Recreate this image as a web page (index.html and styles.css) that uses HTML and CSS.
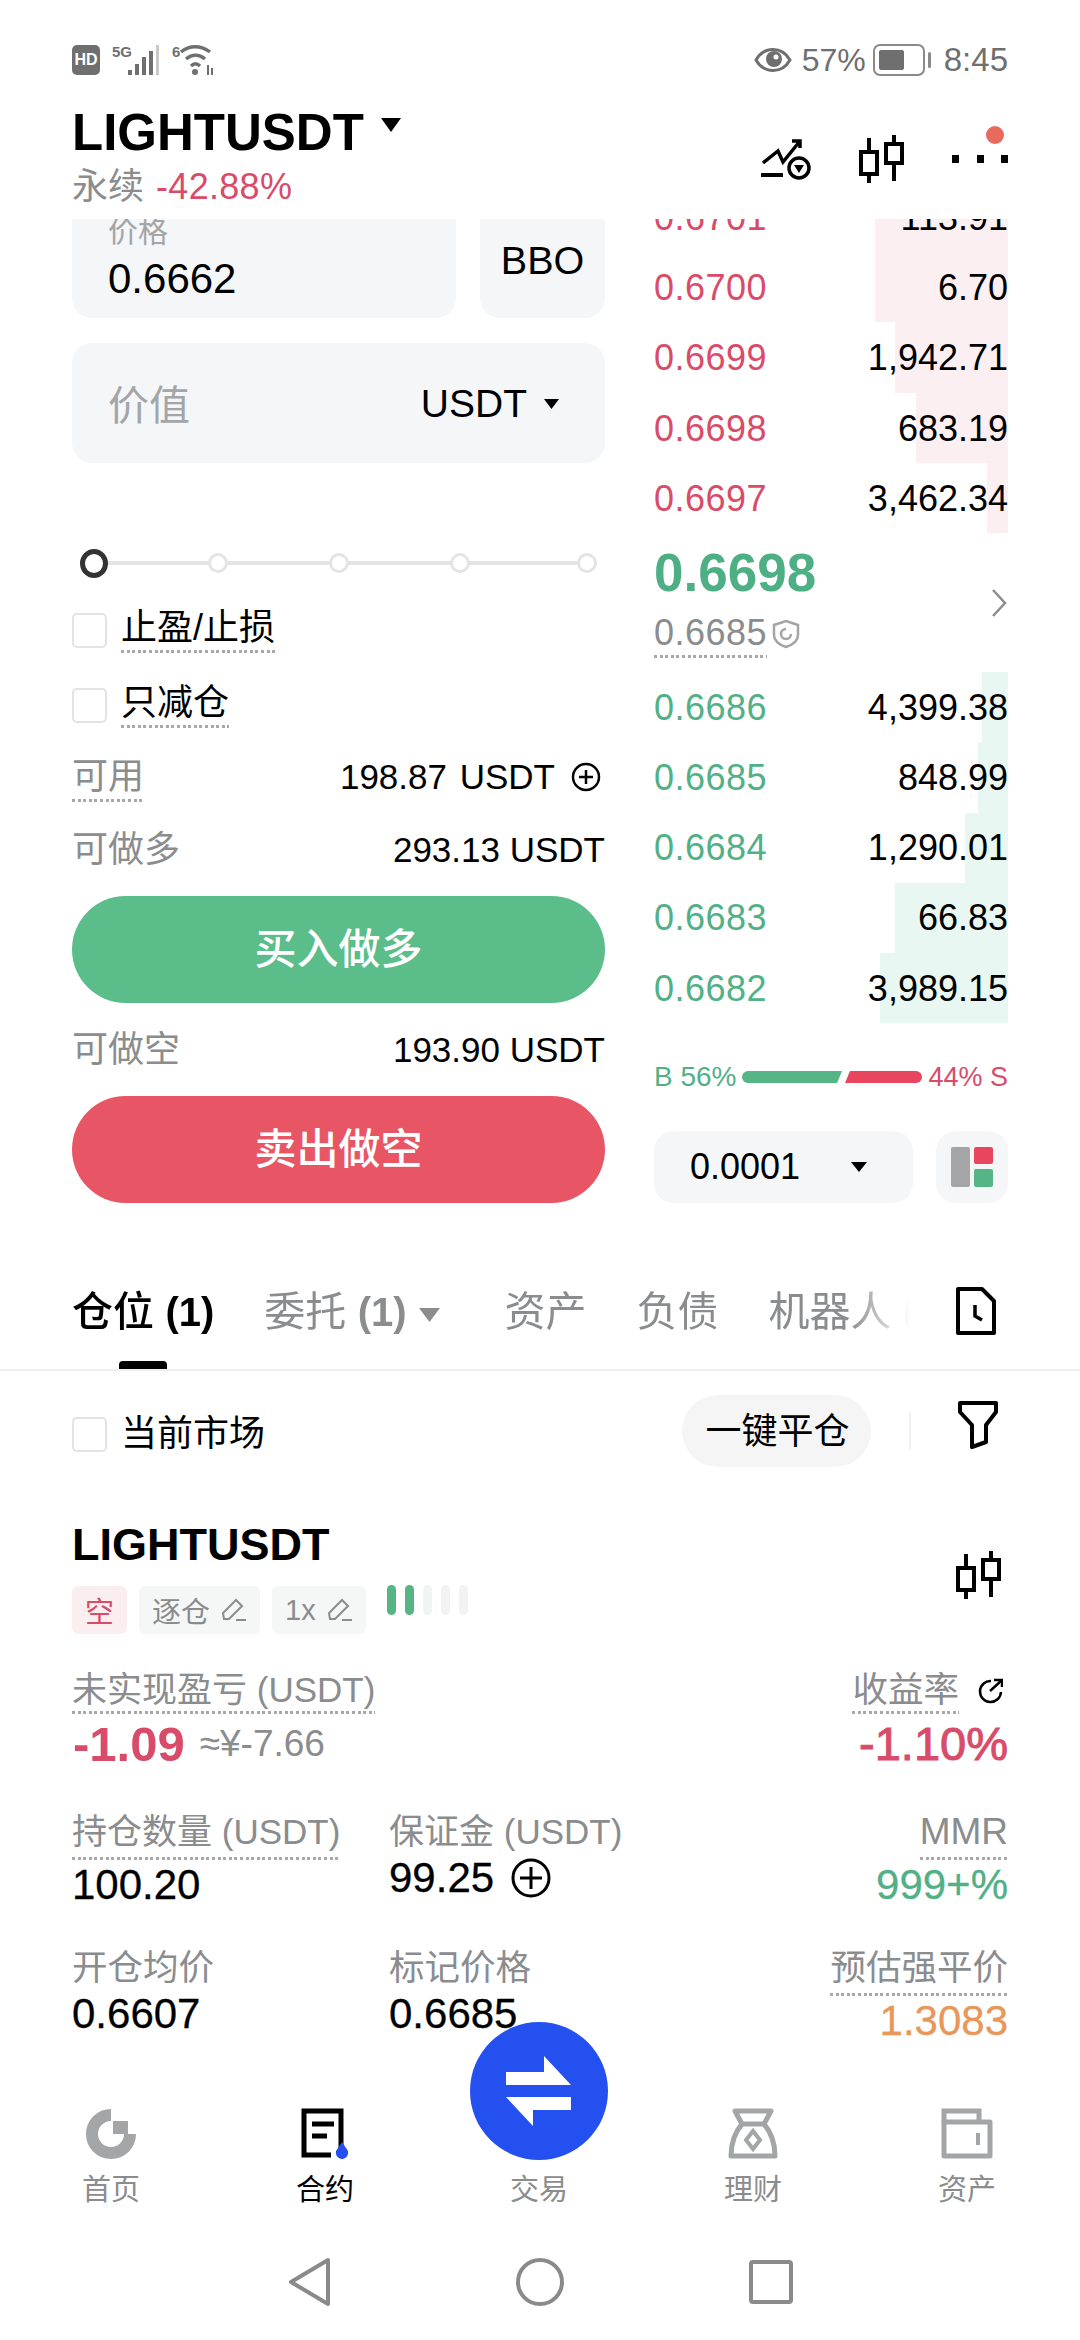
FILE: index.html
```html
<!DOCTYPE html>
<html lang="zh-CN">
<head>
<meta charset="utf-8">
<title>LIGHTUSDT</title>
<link rel="stylesheet" href="styles.css">
</head>
<body>
<div class="phone">

  <!-- system status bar -->
  <div class="status">
    <div class="status-group">
      <span class="hd">HD</span>
      <svg class="sig" width="50" height="32" viewBox="0 0 50 32">
        <text x="0" y="13" class="tiny">5G</text>
        <g fill="#6f6f6f">
          <rect x="16" y="26" width="4" height="5"/><rect x="23" y="20" width="4" height="11"/>
          <rect x="30" y="13" width="4" height="18"/><rect x="37" y="7" width="4" height="24"/>
        </g>
        <rect x="44" y="1" width="3" height="30" fill="#c9c9c9"/>
      </svg>
      <svg class="wifi" width="44" height="32" viewBox="0 0 44 32">
        <text x="0" y="13" class="tiny">6</text>
        <g fill="none" stroke="#6f6f6f" stroke-width="3.4">
          <path d="M9 8 C17 1 29 1 38 8"/><path d="M14 15 C20 10 27 10 33 15"/><path d="M19 22 C22 19 25 19 28 22"/>
        </g>
        <circle cx="23" cy="28" r="3" fill="#6f6f6f"/>
        <path d="M36 21V31M40 24V31" stroke="#6f6f6f" stroke-width="2"/>
      </svg>
    </div>
    <div class="status-group status-right">
      <svg width="38" height="26" viewBox="0 0 38 26">
        <path d="M2 13 C10 -1 28 -1 36 13 C28 27 10 27 2 13Z" fill="none" stroke="#6f6f6f" stroke-width="3"/>
        <circle cx="20" cy="12" r="8" fill="#6f6f6f"/><circle cx="22" cy="10" r="2.5" fill="#fff"/>
      </svg>
      <span class="st-pct">57%</span>
      <svg width="58" height="32" viewBox="0 0 58 32">
        <rect x="1" y="1" width="50" height="30" rx="6" fill="none" stroke="#8a8a8a" stroke-width="2"/>
        <rect x="6" y="6" width="25" height="20" rx="2" fill="#6f6f6f"/>
        <rect x="55" y="8" width="3" height="16" rx="1.5" fill="#8a8a8a"/>
      </svg>
      <span class="st-time">8:45</span>
    </div>
  </div>

  <!-- instrument header -->
  <header class="head">
    <div>
      <div class="symbol">LIGHTUSDT<svg class="sym-caret" width="20" height="14" viewBox="0 0 20 14"><path d="M0 0H20L10 14Z" fill="#000"/></svg></div>
      <div class="sub"><span class="muted">永续</span> <span class="red change">-42.88%</span></div>
    </div>
    <div class="head-icons">
      <svg class="ic-trend" width="50" height="42" viewBox="0 0 50 42">
        <path d="M2 25 L17 13 L22 24 L39 3 M31 3 H39 V10" fill="none" stroke="#000" stroke-width="3.5"/>
        <path d="M0 37H22" stroke="#000" stroke-width="4"/>
        <circle cx="38" cy="30" r="10" fill="#fff" stroke="#000" stroke-width="3.5"/>
        <path d="M33 27H43L38 35Z" fill="#000"/>
      </svg>
      <svg class="ic-candle" width="46" height="50" viewBox="0 0 46 50">
        <path d="M11 3V17M11 39V48M36 0V9M36 28V46" stroke="#000" stroke-width="4"/>
        <rect x="3" y="17" width="16" height="22" fill="none" stroke="#000" stroke-width="4"/>
        <rect x="28" y="9" width="16" height="19" fill="none" stroke="#000" stroke-width="4"/>
      </svg>
      <svg class="ic-more" width="58" height="58" viewBox="0 0 58 58">
        <circle cx="45" cy="9" r="9" fill="#e86a5c"/>
        <rect x="2" y="29" width="7" height="8" fill="#000"/><rect x="27" y="29" width="7" height="8" fill="#000"/><rect x="51" y="29" width="7" height="8" fill="#000"/>
      </svg>
    </div>
  </header>

  <!-- order form and order book -->
  <section class="market">
    <div class="market-grid">
      <div class="form">
        <div class="price-row">
          <div class="box price-box">
            <div class="box-label">价格</div>
            <div class="box-value">0.6662</div>
          </div>
          <div class="box bbo">BBO</div>
        </div>
        <div class="box value-box">
          <span class="placeholder">价值</span>
          <span class="unit">USDT<svg class="caret" width="15" height="10" viewBox="0 0 15 10"><path d="M0 0H15L7.500 10Z" fill="#000"/></svg></span>
        </div>
        <div class="slider">
          <span class="knob"></span><span class="node first"></span><span class="node"></span><span class="node"></span><span class="node last"></span>
        </div>
        <div class="check-row"><span class="checkbox"></span><span class="dotted">止盈/止损</span></div>
        <div class="check-row"><span class="checkbox"></span><span class="dotted">只减仓</span></div>
        <div class="info-row avail">
          <span class="dotted muted">可用</span>
          <span class="info-val spaced">198.87 USDT<svg class="plus-sm" width="30" height="30" viewBox="0 0 30 30"><circle cx="15" cy="15" r="13" fill="none" stroke="#000" stroke-width="2.500"/><path d="M15 8V22M8 15H22" stroke="#000" stroke-width="2.500"/></svg></span>
        </div>
        <div class="info-row long"><span class="muted">可做多</span><span class="info-val">293.13 USDT</span></div>
        <div class="cta buy">买入做多</div>
        <div class="info-row"><span class="muted">可做空</span><span class="info-val">193.90 USDT</span></div>
        <div class="cta sell">卖出做空</div>
      </div>

      <div class="book">
        <div class="book-row ask"><i class="depth" style="width:133px"></i><b>0.6701</b><span>113.91</span></div>
        <div class="book-row ask"><i class="depth" style="width:133px"></i><b>0.6700</b><span>6.70</span></div>
        <div class="book-row ask"><i class="depth" style="width:113px"></i><b>0.6699</b><span>1,942.71</span></div>
        <div class="book-row ask"><i class="depth" style="width:92px"></i><b>0.6698</b><span>683.19</span></div>
        <div class="book-row ask"><i class="depth" style="width:21px"></i><b>0.6697</b><span>3,462.34</span></div>
        <div class="mid">
          <div class="mid-text">
            <div class="mid-price">0.6698</div>
            <div class="mark-row">
              <span class="dotted mark">0.6685</span>
              <svg class="shield" width="28" height="30" viewBox="0 0 28 30">
                <path d="M14 2 L26 6 V16 C26 22 20 26 14 28 C8 26 2 22 2 16 V6Z" fill="none" stroke="#a3a5a7" stroke-width="2.500"/>
                <path d="M19 15 A5 5 0 1 1 14 10" fill="none" stroke="#a3a5a7" stroke-width="2.500"/>
              </svg>
            </div>
          </div>
          <svg class="chev" width="16" height="28" viewBox="0 0 16 28"><path d="M2 1 L14 14 L2 27" fill="none" stroke="#8a8c8e" stroke-width="2.500"/></svg>
        </div>
        <div class="book-row bid"><i class="depth" style="width:26px"></i><b>0.6686</b><span>4,399.38</span></div>
        <div class="book-row bid"><i class="depth" style="width:30px"></i><b>0.6685</b><span>848.99</span></div>
        <div class="book-row bid"><i class="depth" style="width:43px"></i><b>0.6684</b><span>1,290.01</span></div>
        <div class="book-row bid"><i class="depth" style="width:113px"></i><b>0.6683</b><span>66.83</span></div>
        <div class="book-row bid"><i class="depth" style="width:128px"></i><b>0.6682</b><span>3,989.15</span></div>
        <div class="ratio">
          <span class="green">B 56%</span>
          <span class="ratio-bar">
            <svg width="180" height="12" viewBox="0 0 180 12">
              <path d="M6 0H100L95 12H6A6 6 0 0 1 6 0Z" fill="#55b585"/>
              <path d="M108 0H174A6 6 0 0 1 174 12H103Z" fill="#e8455f"/>
            </svg>
          </span>
          <span class="red sell-share">44% S</span>
        </div>
        <div class="book-tools">
          <div class="box step">0.0001<svg width="16" height="10" viewBox="0 0 16 10"><path d="M0 0H16L8 10Z" fill="#000"/></svg></div>
          <div class="box layout">
            <svg width="42" height="42" viewBox="0 0 42 42">
              <rect x="0" y="1" width="19" height="40" rx="2" fill="#a3a5a7"/>
              <rect x="23" y="1" width="19" height="17" rx="2" fill="#e8455f"/>
              <rect x="23" y="23" width="19" height="18" rx="2" fill="#55b585"/>
            </svg>
          </div>
        </div>
      </div>
    </div>
  </section>

  <!-- account tabs -->
  <nav class="tabs">
    <div class="tab-list">
      <span class="tab active">仓位 <b>(1)</b></span>
      <span class="tab">委托 <b>(1)</b><svg class="tab-caret" width="21" height="14" viewBox="0 0 21 14"><path d="M0 0H21L10.500 14Z" fill="#8a8c8e"/></svg></span>
      <span class="tab">资产</span>
      <span class="tab">负债</span>
      <span class="tab">机器人 <b>(0)</b></span>
    </div>
    <svg class="tab-doc" width="42" height="50" viewBox="0 0 42 50">
      <path d="M3 3H27L39 15V47H3Z" fill="none" stroke="#000" stroke-width="4" stroke-linejoin="round"/>
      <path d="M20 19V30L27 34" fill="none" stroke="#000" stroke-width="3.500"/>
    </svg>
  </nav>

  <!-- open positions -->
  <section class="positions">
    <div class="filter-row">
      <span class="checkbox"></span>
      <span class="filter-label">当前市场</span>
      <span class="close-all">一键平仓</span>
      <span class="divider"></span>
      <svg width="40" height="48" viewBox="0 0 40 48"><path d="M2 2H38V11L28 24V41L14 46V24L2 11Z" fill="none" stroke="#000" stroke-width="4" stroke-linejoin="round"/></svg>
    </div>

    <div class="pos-title">
      <span>LIGHTUSDT</span>
      <svg width="46" height="50" viewBox="0 0 46 50">
        <path d="M11 3V17M11 39V48M36 0V9M36 28V46" stroke="#000" stroke-width="4"/>
        <rect x="3" y="17" width="16" height="22" fill="none" stroke="#000" stroke-width="4"/>
        <rect x="28" y="9" width="16" height="19" fill="none" stroke="#000" stroke-width="4"/>
      </svg>
    </div>

    <div class="tags">
      <span class="tag tag-short">空</span>
      <span class="tag">逐仓<svg width="26" height="26" viewBox="0 0 26 26"><path d="M3 22 L2 16 L15 3 L21 9 L8 22Z M15 23H25" fill="none" stroke="#8a8c8e" stroke-width="2"/></svg></span>
      <span class="tag">1x<svg width="26" height="26" viewBox="0 0 26 26"><path d="M3 22 L2 16 L15 3 L21 9 L8 22Z M15 23H25" fill="none" stroke="#8a8c8e" stroke-width="2"/></svg></span>
      <span class="level"><i class="on"></i><i class="on"></i><i></i><i></i><i></i></span>
    </div>

    <div class="stat-grid first">
      <div class="stat">
        <span class="dotted stat-label flush">未实现盈亏 (USDT)</span>
        <div class="stat-big red"><b>-1.09</b><span class="approx">≈¥-7.66</span></div>
      </div>
      <div class="stat right col3">
        <span class="stat-head">
          <span class="dotted stat-label flush han">收益率</span>
          <svg width="26" height="26" viewBox="0 0 26 26"><path d="M14 3 A10.500 10.500 0 1 0 24 14" fill="none" stroke="#000" stroke-width="2.500"/><path d="M13 13 L24 3 M17 2 H25 V9" fill="none" stroke="#000" stroke-width="2.500"/></svg>
        </span>
        <div class="stat-big red"><span class="pct">-1.10%</span></div>
      </div>
    </div>

    <div class="stat-grid second">
      <div class="stat">
        <span class="dotted stat-label">持仓数量 (USDT)</span>
        <div class="stat-val">100.20</div>
      </div>
      <div class="stat mid-col">
        <span class="stat-label">保证金 (USDT)</span>
        <div class="stat-val">99.25<svg class="plus-lg" width="40" height="40" viewBox="0 0 40 40"><circle cx="20" cy="20" r="18" fill="none" stroke="#000" stroke-width="3"/><path d="M20 9V31M9 20H31" stroke="#000" stroke-width="3"/></svg></div>
      </div>
      <div class="stat right">
        <span class="dotted stat-label mmr">MMR</span>
        <div class="stat-val green">999+%</div>
      </div>
    </div>

    <div class="stat-grid third">
      <div class="stat">
        <span class="stat-label han">开仓均价</span>
        <div class="stat-val">0.6607</div>
      </div>
      <div class="stat mid-col">
        <span class="stat-label han">标记价格</span>
        <div class="stat-val">0.6685</div>
      </div>
      <div class="stat right">
        <span class="dotted stat-label han">预估强平价</span>
        <div class="stat-val orange">1.3083</div>
      </div>
    </div>
  </section>

  <!-- app navigation -->
  <nav class="tabbar">
    <div class="nav-item">
      <svg width="52" height="52" viewBox="0 0 52 52">
        <path d="M26 7 A19 19 0 1 0 45 26" fill="none" stroke="#a3a5a7" stroke-width="12"/>
        <rect x="28" y="13" width="15" height="13" fill="#a3a5a7"/>
      </svg>
      <span>首页</span>
    </div>
    <div class="nav-item current">
      <svg width="52" height="52" viewBox="0 0 52 52">
        <path d="M42 40V3H5V47H32" fill="none" stroke="#000" stroke-width="5"/>
        <path d="M13 16H35M13 28H28" stroke="#000" stroke-width="5"/>
        <path d="M43 34 L49 43 C50 49 45 51 43 51 C41 51 36 49 37 43Z" fill="#2450f0"/>
      </svg>
      <span>合约</span>
    </div>
    <div class="nav-item trade">
      <div class="fab">
        <svg width="66" height="70" viewBox="0 0 66 70">
          <path d="M38 0 L65 29 H0 V16 H38Z M0 41 H65 V54 H27 V70Z" fill="#fff"/>
        </svg>
      </div>
      <span class="nav-spacer"></span>
      <span>交易</span>
    </div>
    <div class="nav-item">
      <svg width="52" height="52" viewBox="0 0 52 52">
        <path d="M8 3H44L37 16C43 23 48 32 48 48H4C4 32 9 23 15 16Z" fill="none" stroke="#a3a5a7" stroke-width="5" stroke-linejoin="round"/>
        <path d="M15 16H37" stroke="#a3a5a7" stroke-width="5"/>
        <path d="M26 23 L33 32 L26 41 L19 32Z" fill="none" stroke="#a3a5a7" stroke-width="4"/>
      </svg>
      <span>理财</span>
    </div>
    <div class="nav-item">
      <svg width="52" height="52" viewBox="0 0 52 52">
        <path d="M3 14V3H38V14" fill="none" stroke="#a3a5a7" stroke-width="5"/>
        <rect x="3" y="14" width="46" height="34" fill="none" stroke="#a3a5a7" stroke-width="5" stroke-linejoin="round"/>
        <path d="M37 25V37" stroke="#a3a5a7" stroke-width="4"/>
      </svg>
      <span>资产</span>
    </div>
  </nav>

  <!-- system navigation -->
  <div class="sysnav">
    <svg width="48" height="50" viewBox="0 0 48 50"><path d="M43 3 L6 25 L43 47Z" fill="none" stroke="#8a8a8a" stroke-width="4" stroke-linejoin="round"/></svg>
    <svg width="48" height="50" viewBox="0 0 48 50"><circle cx="24" cy="25" r="22" fill="none" stroke="#8a8a8a" stroke-width="4"/></svg>
    <svg width="48" height="50" viewBox="0 0 48 50"><rect x="4" y="5" width="40" height="40" rx="2" fill="none" stroke="#8a8a8a" stroke-width="4"/></svg>
  </div>
</div>
</body>
</html>
```

FILE: styles.css
```css
* { box-sizing: border-box; }

html, body { margin: 0; padding: 0; background: #fff; }

.phone {
  position: relative;
  width: 1080px;
  height: 2340px;
  overflow: hidden;
  display: flex;
  flex-direction: column;
  font-family: "Liberation Sans", "Noto Sans CJK SC", sans-serif;
  color: #000;
  font-size: 36px;
}

.muted { color: #8a8c8e; }
.red { color: #d94c69; }
.green { color: #52b087; }
.orange { color: #e8975a; }

.dotted {
  display: inline-block;
  padding-bottom: 3px;
  background: repeating-linear-gradient(90deg, #a6a8aa 0 3px, transparent 3px 5.600px) left bottom / 100% 3px no-repeat;
}

/* Status bar */
.status {
  height: 100px;
  flex: none;
  padding: 20px 72px 0;
  display: flex;
  justify-content: space-between;
  align-items: center;
}
.status-group { display: flex; align-items: center; }
.hd {
  width: 28px;
  height: 30px;
  border-radius: 5px;
  background: #6f6f6f;
  color: #fff;
  font-size: 16px;
  font-weight: 700;
  line-height: 30px;
  text-align: center;
}
.tiny { font: 700 15px "Liberation Sans", sans-serif; fill: #6f6f6f; }
.sig { margin-left: 12px; }
.wifi { margin-left: 10px; }
.status-right { color: #6f6f6f; }
.st-pct { font-size: 32px; margin: 0 7px 0 10px; }
.st-time { font-size: 33px; margin-left: 13px; }

/* Instrument header */
.head {
  height: 119px;
  flex: none;
  padding: 5px 72px 0;
  display: flex;
  justify-content: space-between;
}
.symbol {
  font-size: 51px;
  font-weight: 700;
  line-height: 56px;
  display: flex;
}
.sym-caret { margin: 13px 0 0 17px; }
.sub { margin-top: 4px; line-height: 44px; font-size: 36px; }
.change { margin-left: 2px; letter-spacing: 0.300px; }
.head-icons { display: flex; align-items: flex-start; margin-top: 21px; }
.ic-trend { margin-top: 12px; }
.ic-candle { margin: 9px 0 0 47px; }
.ic-more { margin-left: 46px; }

/* Order form and book */
.market {
  height: 1051px;
  flex: none;
  overflow: hidden;
  padding: 0 72px;
}
.market-grid {
  margin-top: -37px;
  display: grid;
  grid-template-columns: 533px 354px;
  column-gap: 49px;
}
.form { padding-top: 7px; }
.box { background: #f5f6f8; border-radius: 20px; }
.price-row { display: flex; gap: 24px; }
.price-box { width: 384px; height: 129px; padding: 25px 36px 0; }
.box-label { color: #a3a5a7; font-size: 30px; line-height: 36px; }
.box-value { font-size: 42px; line-height: 48px; margin-top: 5px; }
.bbo {
  flex: 1;
  height: 129px;
  padding-top: 49px;
  text-align: center;
  font-size: 39.500px;
  line-height: 44px;
}
.value-box {
  height: 120px;
  margin-top: 25px;
  padding: 0 44px 0 36px;
  display: flex;
  justify-content: space-between;
  align-items: center;
}
.placeholder { color: #a3a5a7; font-size: 41px; margin-top: -3px; }
.unit { font-size: 39px; display: flex; align-items: center; margin: 2px 2px 0 0; }
.caret { margin-left: 17px; }

.slider {
  height: 30px;
  margin-top: 85px;
  padding: 0 8px 0 8px;
  display: flex;
  align-items: center;
  gap: 101px;
  background: linear-gradient(#e4e4e4, #e4e4e4) center / 500px 4px no-repeat;
}
.knob {
  width: 28px;
  height: 29px;
  flex: none;
  border: 5px solid #333;
  border-radius: 50%;
  background: #fff;
}
.node {
  width: 20px;
  height: 20px;
  flex: none;
  border: 3px solid #e4e4e4;
  border-radius: 50%;
  background: #fff;
}
.node.first { margin-left: -1px; }
.node.last { margin-left: auto; }

.check-row {
  margin-top: 28px;
  display: flex;
  align-items: flex-start;
  line-height: 44px;
}
.checkbox {
  width: 35px;
  height: 35px;
  flex: none;
  border: 2.500px solid #e2e3e4;
  border-radius: 5px;
  background: #fff;
}
.check-row .checkbox { margin: 7px 14px 0 0; }

.info-row {
  margin-top: 24px;
  height: 44px;
  line-height: 44px;
  display: flex;
  justify-content: space-between;
  align-items: center;
}
.info-row.avail { margin-top: 27px; height: 47px; align-items: flex-start; }
.info-row.long { margin-top: 26px; }
.info-val { font-size: 35px; display: flex; align-items: center; }
.info-val.spaced { word-spacing: 3px; }
.plus-sm { margin: 0 4px 0 16px; }
.cta {
  height: 107px;
  margin-top: 24px;
  border-radius: 54px;
  color: #fff;
  font-size: 42px;
  font-weight: 500;
  line-height: 107px;
  text-align: center;
}
.buy { background: #5bbd8a; }
.sell { background: #e85665; }
.cta + .info-row { margin-top: 25px; }

.book-row {
  position: relative;
  display: flex;
  justify-content: space-between;
  align-items: center;
  font-size: 36px;
}
.book-row b { font-weight: 400; position: relative; letter-spacing: 0.500px; }
.book-row span { position: relative; }
.depth { position: absolute; top: 0; right: 0; bottom: 0; }
.ask { height: 70.200px; padding-top: 2px; }
.ask b { color: #d94c69; }
.ask .depth { background: #fbeff1; }
.bid { height: 70.300px; padding-top: 1px; }
.bid b { color: #52b087; }
.bid .depth { background: #e8f7f1; }

.mid {
  height: 139px;
  display: flex;
  justify-content: space-between;
  align-items: center;
}
.mid-price {
  color: #4eaf85;
  font-size: 53px;
  font-weight: 700;
  line-height: 60px;
}
.mid-text { margin-top: -4px; }
.mark-row { display: flex; align-items: center; margin-top: 8px; line-height: 44px; }
.mark { color: #8a8c8e; font-size: 36px; letter-spacing: 0.500px; }
.shield { margin-left: 5px; }
.chev { margin: 2px 1px 0 0; }

.ratio {
  height: 24px;
  margin-top: 42px;
  display: flex;
  justify-content: space-between;
  align-items: center;
  font-size: 28px;
}
.sell-share { font-size: 27px; }
.ratio-bar { display: flex; }
.book-tools { margin-top: 42px; display: flex; justify-content: space-between; }
.step {
  width: 259px;
  height: 72px;
  padding: 0 46px 0 36px;
  display: flex;
  justify-content: space-between;
  align-items: center;
  font-size: 36px;
}
.layout {
  width: 72px;
  height: 72px;
  display: flex;
  justify-content: center;
  align-items: center;
}

/* Account tabs */
.tabs {
  height: 101px;
  flex: none;
  padding: 0 83px 0 72px;
  border-bottom: 2px solid #f0f0f0;
  display: flex;
  justify-content: space-between;
}
.tab-list {
  width: 838px;
  height: 99px;
  overflow: hidden;
  padding-top: 19px;
  display: flex;
  gap: 50px;
  white-space: nowrap;
  font-size: 41px;
  line-height: 46px;
  color: #8a8c8e;
  -webkit-mask-image: linear-gradient(90deg, #000 calc(100% - 60px), transparent);
  mask-image: linear-gradient(90deg, #000 calc(100% - 60px), transparent);
}
.tab { position: relative; flex: none; height: 80px; }
.tab b { font-weight: 700; font-size: 40px; }
.tab.active { color: #000; font-weight: 500; }
.tab.active::after {
  content: "";
  position: absolute;
  left: 47px;
  bottom: 0;
  width: 48px;
  height: 8px;
  border-radius: 4px 4px 0 0;
  background: #000;
}
.tab-caret { margin: 0 15px 4px 12px; }
.tab-doc { margin-top: 16px; }

/* Positions */
.positions {
  height: 729px;
  flex: none;
  overflow: hidden;
  padding: 24px 72px 0;
}
.filter-row { height: 72px; display: flex; align-items: center; }
.filter-row .checkbox { margin-top: 6px; }
.filter-label { margin: -3px 0 0 14px; }
.close-all {
  margin-left: auto;
  width: 189px;
  height: 72px;
  border-radius: 36px;
  background: #f5f5f5;
  padding: 1px 0 0 2px;
  line-height: 72px;
  text-align: center;
}
.divider { width: 2px; height: 38px; margin: 0 47px 0 38px; background: #f0f0f0; }
.filter-row svg { margin-right: 10px; margin-top: -12px; }

.pos-title {
  margin-top: 53px;
  height: 50px;
  display: flex;
  justify-content: space-between;
  align-items: flex-start;
  font-size: 45px;
  font-weight: 700;
  line-height: 50px;
}
.pos-title svg { margin: 31px 7px 0 0; }

.tags { margin-top: 16px; height: 48px; display: flex; gap: 12px; }
.tag {
  height: 48px;
  padding: 0 13px;
  display: flex;
  align-items: center;
  gap: 11px;
  border-radius: 6px;
  background: #f5f6f6;
  color: #8a8c8e;
  font-size: 29px;
}
.tag-short { background: #fbeef0; color: #d94c69; }
.level { display: flex; gap: 9px; margin-left: 9px; margin-top: -1px; }
.level i { width: 9px; height: 30px; border-radius: 5px; background: #f2f3f3; }
.level i.on { background: #55b585; }

.stat-grid { display: grid; grid-template-columns: 318px 1fr auto; }
.stat-grid.first { margin-top: 35px; }
.stat-grid.second { margin-top: 42px; }
.stat-grid.third { margin-top: 37px; }
.col3 { grid-column: 3; }
.mid-col { margin-left: -1px; }
.stat.right { text-align: right; }
.stat-label { color: #8a8c8e; font-size: 35px; line-height: 42px; }
.stat-label.han { font-size: 35.500px; }
.stat-label.mmr { font-size: 37px; }
.stat-label.dotted { padding-bottom: 7px; }
.stat-label.dotted.flush { padding-bottom: 3px; }
.stat-head { display: flex; align-items: flex-start; gap: 18px; justify-content: flex-end; }
.stat-head svg { margin: 9px 5px 0 0; }
.stat-big { margin-top: 5px; line-height: 50px; display: flex; align-items: center; font-size: 47px; }
.stat.right .stat-big { justify-content: flex-end; }
.stat-big b { font-size: 49px; margin-left: 1px; }
.pct { -webkit-text-stroke: 1px currentColor; }
.approx { color: #8a8c8e; font-size: 37px; margin-left: 15px; }
.stat-val { margin-top: 0; font-size: 42px; line-height: 50px; display: flex; align-items: center; -webkit-text-stroke: 0.300px currentColor; }
.stat.right .stat-val { justify-content: flex-end; }
.plus-lg { margin-left: 17px; }

/* App navigation */
.tabbar {
  height: 110px;
  flex: none;
  padding: 0 6px 0 4px;
  display: grid;
  grid-template-columns: repeat(5, 214px);
}
.nav-item {
  position: relative;
  padding-top: 8px;
  display: flex;
  flex-direction: column;
  align-items: center;
  color: #8a8c8e;
  font-size: 29px;
  line-height: 36px;
}
.nav-item svg { display: block; }
.nav-item > span:last-child { margin-top: 12px; }
.nav-item.current { color: #000; }
.nav-spacer { height: 52px; }
.fab {
  position: absolute;
  left: 38px;
  top: -78px;
  width: 138px;
  height: 138px;
  border-radius: 50%;
  background: #2450f0;
  display: flex;
  justify-content: center;
  align-items: center;
}

/* System navigation */
.sysnav {
  height: 130px;
  flex: none;
  padding-top: 47px;
  display: flex;
  justify-content: center;
  align-items: flex-start;
  gap: 183px;
}
```
